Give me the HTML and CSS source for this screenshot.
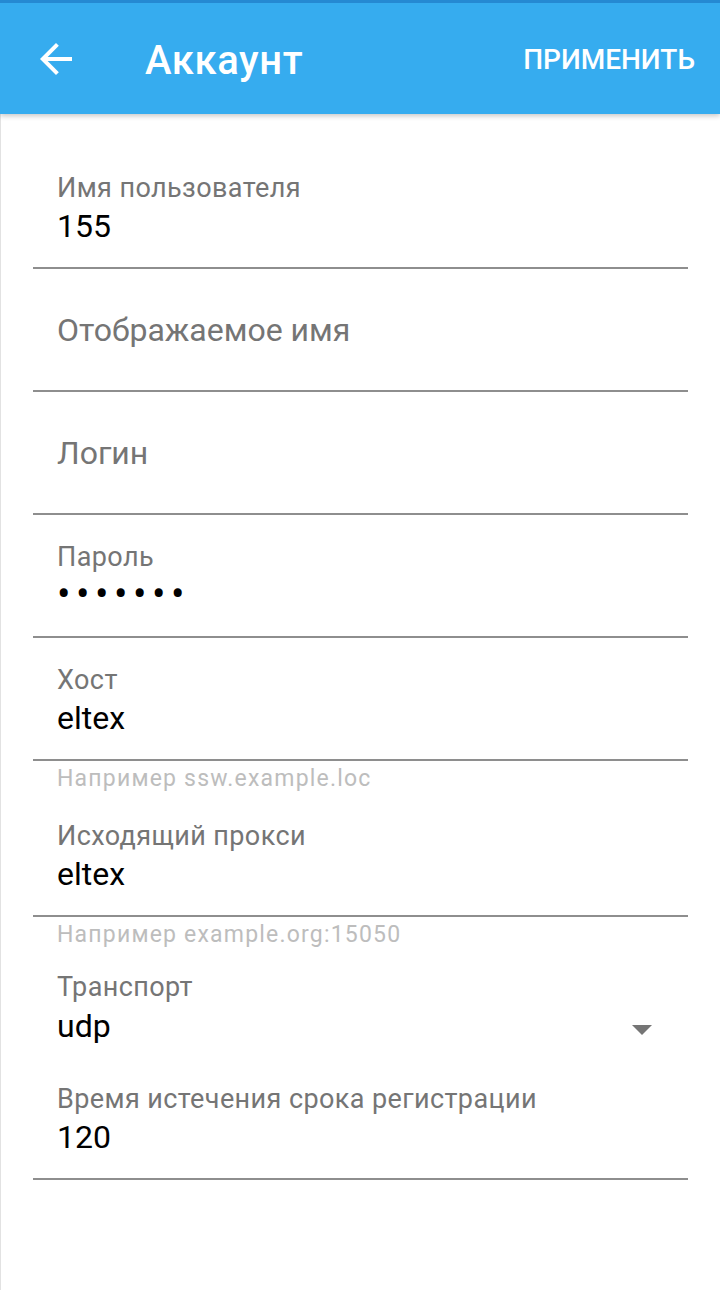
FILE: index.html
```html
<!DOCTYPE html>
<html lang="ru">
<head>
<meta charset="utf-8">
<title>Аккаунт</title>
<link rel="stylesheet" href="styles.css">
</head>
<body>
<div class="screen">
  <header class="appbar">
    <button class="back" aria-label="Назад">
      <svg viewBox="0 0 24 24" width="48" height="48"><path d="M20 11H7.83l5.59-5.59L12 4l-8 8 8 8 1.41-1.41L7.83 13H20v-2z" fill="#ffffff"/></svg>
    </button>
    <h1 class="title">Аккаунт</h1>
    <span class="action">ПРИМЕНИТЬ</span>
  </header>
  <main class="form">
    <div class="field">
      <div class="label">Имя пользователя</div>
      <div class="value">155</div>
    </div>
    <div class="field empty">
      <div class="hint">Отображаемое имя</div>
    </div>
    <div class="field empty">
      <div class="hint">Логин</div>
    </div>
    <div class="field">
      <div class="label">Пароль</div>
      <div class="value dots">•••••••</div>
    </div>
    <div class="field">
      <div class="label">Хост</div>
      <div class="value">eltex</div>
    </div>
    <div class="helper">Например ssw.example.loc</div>
    <div class="field">
      <div class="label">Исходящий прокси</div>
      <div class="value">eltex</div>
    </div>
    <div class="helper">Например example.org:15050</div>
    <div class="spinner">
      <div class="label">Транспорт</div>
      <div class="spinner-row">
        <div class="value">udp</div>
        <span class="caret"></span>
      </div>
    </div>
    <div class="field">
      <div class="label">Время истечения срока регистрации</div>
      <div class="value">120</div>
    </div>
  </main>
</div>
</body>
</html>
```
FILE: styles.css
```css
html, body {
  margin: 0;
  padding: 0;
  background: #ffffff;
}

body {
  font-family: Roboto, "Noto Sans", "Liberation Sans", sans-serif;
}

.screen {
  width: 720px;
  height: 1290px;
  overflow: hidden;
  display: flex;
  flex-direction: column;
}

.appbar {
  position: relative;
  z-index: 1;
  flex: 0 0 auto;
  height: 111px;
  border-top: 3px solid #2589d2;
  background: #36acef;
  display: flex;
  align-items: center;
  box-shadow: 0 2px 5px rgba(0, 0, 0, 0.22);
}

.back {
  margin-left: 32px;
  width: 48px;
  height: 48px;
  padding: 0;
  border: 0;
  background: none;
  display: flex;
}

.title {
  margin: 5px 0 0 65px;
  font-size: 40px;
  font-weight: 500;
  letter-spacing: 0.6px;
  color: #ffffff;
  line-height: 48px;
}

.action {
  margin: 3px 25px 0 auto;
  font-size: 28px;
  font-weight: 500;
  color: #ffffff;
  line-height: 34px;
}

.form {
  flex: 1 1 auto;
  border-left: 1px solid #e2e2e2;
  padding: 32px 32px 0 32px;
}

.field {
  padding: 27px 0 21px 24px;
  border-bottom: 2px solid #8e8e8e;
}

.field.empty {
  padding-bottom: 26px;
}

.label {
  font-size: 27px;
  line-height: 30px;
  letter-spacing: 0.4px;
  color: #757575;
}

.value {
  margin-top: 3px;
  font-size: 32px;
  line-height: 40px;
  color: #000000;
}

.dots {
  font-size: 40px;
  letter-spacing: 5.5px;
}

.hint {
  font-size: 32px;
  line-height: 68px;
  color: #757575;
}

.helper {
  padding: 6px 0 3px 24px;
  font-size: 23px;
  line-height: 24px;
  letter-spacing: 1.2px;
  color: #bdbdbd;
}

.spinner {
  padding: 22px 0 11px 24px;
}

.spinner-row {
  margin-top: 4px;
  display: flex;
  align-items: center;
  justify-content: space-between;
  padding-right: 36px;
}

.spinner-row .value {
  margin-top: 0;
}

.caret {
  width: 0;
  height: 0;
  border-left: 10px solid transparent;
  border-right: 10px solid transparent;
  border-top: 10px solid #757575;
  margin-top: 8px;
}
```
